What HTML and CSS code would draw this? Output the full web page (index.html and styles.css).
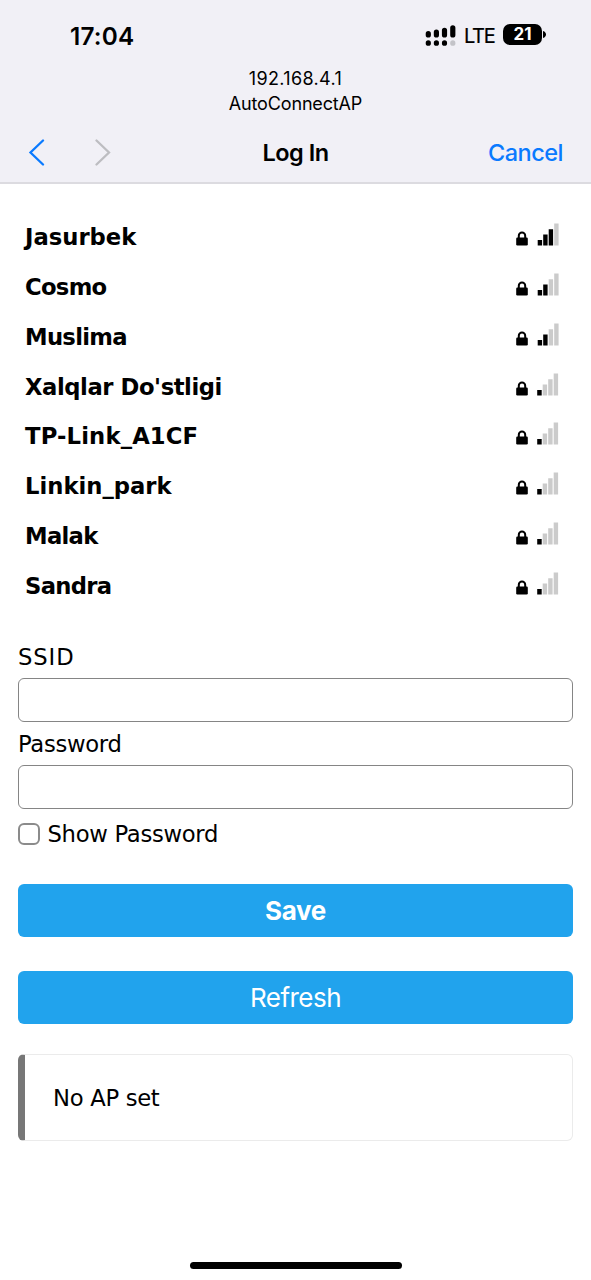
FILE: index.html
```
<!DOCTYPE html>
<html lang="en">
<head>
<meta charset="utf-8">
<title>Log In</title>
<link rel="stylesheet" href="styles.css">
</head>
<body>
<svg width="0" height="0" class="defs">
  <symbol id="lock" viewBox="0 0 12 15"><path d="M2.800 7V4.800a3.200 3.200 0 0 1 6.400 0V7" fill="none" stroke="#000" stroke-width="2"/><rect x="0.200" y="6.600" width="11.600" height="7.900" rx="1.200"/></symbol>
  <symbol id="level1" viewBox="0 0 22 23"><path d="M.2 17h4.500v5.500H.2z"/><path fill="#cbcbcb" d="M5.700 11.600h4.400v10.900H5.700zM11.200 6.200h4.400v16.300h-4.400zM16.700.5h4.400v22h-4.400z"/></symbol>
  <symbol id="level2" viewBox="0 0 22 23"><path d="M.7 17h4.400v5.500H.7zM6.200 11.600h4.400v10.900H6.200z"/><path fill="#cbcbcb" d="M11.700 6.200h4.400v16.300h-4.400zM17.200.5h4.400v22h-4.400z"/></symbol>
  <symbol id="level3" viewBox="0 0 22 23"><path d="M.7 17h4.400v5.500H.7zM6.200 11.600h4.400v10.900H6.200zM11.700 6.200h4.400v16.300h-4.400z"/><path fill="#cbcbcb" d="M17.200.5h4.400v22h-4.400z"/></symbol>
</svg>
<header class="header">
  <div class="status">
    <span class="time">17:04</span>
    <div class="status-right">
      <svg class="cell" width="32" height="22" viewBox="0 0 32 22"><path d="M3.300 8.700v1.300M11.400 7.200v2.800M19.500 5.300v4.700M27.800 2.800v7.200M3.300 17.900v.3M11.400 17.900v.3M19.500 17.900v.3" stroke="#000" stroke-width="5.200" stroke-linecap="round"/><path d="M27.800 17.900v.3" stroke="#c3c3c8" stroke-width="5.200" stroke-linecap="round"/></svg>
      <span class="lte">LTE</span>
      <span class="battery">21</span>
      <svg class="tip" width="3" height="7" viewBox="0 0 3 7"><path d="M0 0C4 1.200 4 5.800 0 7z"/></svg>
    </div>
  </div>
  <div class="address"><span class="ip">192.168.4.1</span><span class="host">AutoConnectAP</span></div>
  <nav class="nav">
    <div class="arrows">
      <svg width="18" height="28" viewBox="0 0 18 28"><path d="M15 2.500L2.500 14.500l12.500 12" fill="none" stroke="#0a7aff" stroke-width="2.300" stroke-linecap="round"/></svg>
      <svg width="18" height="28" viewBox="0 0 18 28"><path d="M2.500 2.500l12.500 12L2.500 26.500" fill="none" stroke="#bdbdc1" stroke-width="2.300" stroke-linecap="round"/></svg>
    </div>
    <h1 class="title">Log In</h1>
    <a class="cancel">Cancel</a>
  </nav>
</header>
<main class="main">
  <ul class="list">
    <li class="row"><span>Jasurbek</span><span class="signal"><svg class="lock"><use href="#lock"/></svg><svg class="bars"><use href="#level3"/></svg></span></li>
    <li class="row"><span class="tight">Cosmo</span><span class="signal"><svg class="lock"><use href="#lock"/></svg><svg class="bars"><use href="#level2"/></svg></span></li>
    <li class="row"><span class="tight">Muslima</span><span class="signal"><svg class="lock"><use href="#lock"/></svg><svg class="bars"><use href="#level2"/></svg></span></li>
    <li class="row"><span class="snug">Xalqlar Do'stligi</span><span class="signal"><svg class="lock"><use href="#lock"/></svg><svg class="bars"><use href="#level1"/></svg></span></li>
    <li class="row"><span class="loose">TP-Link_A1CF</span><span class="signal"><svg class="lock"><use href="#lock"/></svg><svg class="bars"><use href="#level1"/></svg></span></li>
    <li class="row"><span>Linkin_park</span><span class="signal"><svg class="lock"><use href="#lock"/></svg><svg class="bars"><use href="#level1"/></svg></span></li>
    <li class="row"><span class="tight">Malak</span><span class="signal"><svg class="lock"><use href="#lock"/></svg><svg class="bars"><use href="#level1"/></svg></span></li>
    <li class="row"><span class="tight">Sandra</span><span class="signal"><svg class="lock"><use href="#lock"/></svg><svg class="bars"><use href="#level1"/></svg></span></li>
  </ul>
  <form class="form">
    <label class="label ssid" for="ssid">SSID</label>
    <input class="field" id="ssid" type="text">
    <label class="label" for="pw">Password</label>
    <input class="field" id="pw" type="password">
    <label class="check"><input class="box" type="checkbox"><span>Show Password</span></label>
    <button class="button save" type="button">Save</button>
    <button class="button refresh" type="button">Refresh</button>
  </form>
  <div class="message">No AP set</div>
</main>
<footer class="home"><div class="home-bar"></div></footer>
</body>
</html>
```
FILE: styles.css
```
* { box-sizing: border-box; }
body { margin: 0; height: 1280px; display: flex; flex-direction: column; background: #fff; color: #000; font-family: "DejaVu Sans", Verdana, sans-serif; font-size: 22.7px; overflow: hidden; }
.defs { position: absolute; }
svg { display: block; flex: none; }
.header { height: 184px; flex: none; background: #f1f0f6; border-bottom: 2px solid #dcdbe0; font-family: Inter, sans-serif; }
.status { height: 66px; padding: 22px 45px 0 70px; display: flex; justify-content: space-between; }
.time { font-size: 24.3px; line-height: 28px; font-weight: 600; letter-spacing: 0.2px; }
.status-right { display: flex; align-items: center; height: 26px; }
.cell { margin-right: 7px; margin-top: 1px; }
.lte { width: 32px; font-size: 20px; line-height: 26px; letter-spacing: -1.3px; margin-top: 2px; -webkit-text-stroke: 0.2px #000; }
.battery { width: 39px; height: 21px; margin-left: 7px; margin-top: -1px; border-radius: 7px; background: #000; color: #fff; font-size: 17px; line-height: 21px; font-weight: 700; text-align: center; }
.tip { margin-left: 1px; margin-top: -1px; }
.address { display: flex; flex-direction: column; align-items: center; font-size: 18px; line-height: 25px; }
.ip { letter-spacing: 0.35px; }
.host { letter-spacing: -0.15px; }
.nav { height: 72px; padding: 0 28px; display: grid; grid-template-columns: 1fr auto 1fr; align-items: center; font-size: 23.5px; }
.arrows { display: flex; gap: 48px; }
.title { margin: 0; font-size: 23.5px; font-weight: 600; letter-spacing: -0.5px; }
.cancel { justify-self: end; color: #0a7aff; font-weight: 500; letter-spacing: -0.5px; }
.main { padding: 28.500px 18px 0; }
.list { list-style: none; margin: 0; padding: 0; font-weight: 700; }
.row { height: 49.75px; padding: 0 14px 0 7px; display: flex; align-items: center; justify-content: space-between; }
.tight { letter-spacing: -0.7px; }
.snug { letter-spacing: -0.43px; }
.loose { letter-spacing: 0.15px; }
.signal { display: flex; align-items: flex-end; gap: 9px; margin-bottom: 5px; }
.lock { width: 12px; height: 15px; }
.bars { width: 22px; height: 23px; }
.form { display: flex; flex-direction: column; padding-top: 31.500px; }
.label { height: 36px; line-height: 31px; letter-spacing: -0.3px; }
.ssid { letter-spacing: 0.9px; }
.field { height: 44px; width: 100%; margin: 0 0 7px; border: 1px solid #858585; border-radius: 6px; background: #fff; }
.check { display: flex; align-items: center; gap: 7px; height: 36px; letter-spacing: -0.3px; }
.box { appearance: none; width: 22px; height: 22px; margin: 0; border: 2px solid #8b8b8b; border-radius: 6px; }
.check span { margin-left: 0.5px; }
.button { height: 52.500px; padding: 1px 0 0; border: 0; border-radius: 6px; background: #21a3ed; color: #fff; font-family: Inter, sans-serif; font-size: 26px; }
.save { margin-top: 32px; font-weight: 700; letter-spacing: -0.3px; }
.refresh { margin-top: 34.500px; font-weight: 400; letter-spacing: -0.5px; }
.message { height: 87px; margin-top: 30.500px; padding-left: 28px; border: 1px solid #ebebeb; border-left: 7px solid #777; border-radius: 6px; line-height: 87px; letter-spacing: -0.3px; }
.home { margin-top: auto; height: 18px; display: flex; justify-content: center; }
.home-bar { width: 212px; height: 7px; border-radius: 4px; background: #000; }
```
